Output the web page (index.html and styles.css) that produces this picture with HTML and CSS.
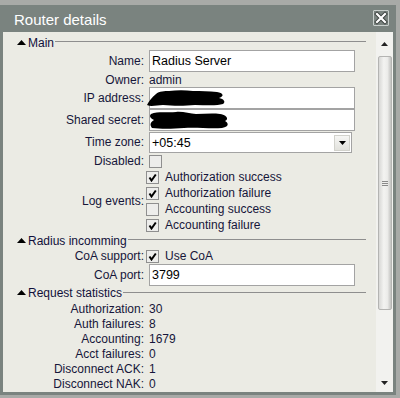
FILE: index.html
```html
<!DOCTYPE html>
<html>
<head>
<meta charset="utf-8">
<link rel="stylesheet" href="styles.css">
</head>
<body>
<div class="dialog">
  <div class="titlebar">
    <span class="title">Router details</span>
    <span class="close">
      <svg width="14" height="14" viewBox="0 0 14 14"><path d="M3 3 L11 11 M11 3 L3 11" stroke="#3a3f3d" stroke-width="4" stroke-linecap="square"/><path d="M3 3 L11 11 M11 3 L3 11" stroke="#ffffff" stroke-width="2.2" stroke-linecap="square"/></svg>
    </span>
  </div>
  <div class="body">
    <div class="content">
      <div class="head"><svg class="tri" width="9" height="5" viewBox="0 0 9 5"><polygon points="0,5 9,5 4.5,0" fill="#000"/></svg><span>Main</span><span class="rule"></span></div>
      <div class="form">
        <div class="lbl r22">Name:</div><div class="ctl r22"><div class="input">Radius Server</div></div>
        <div class="lbl r15">Owner:</div><div class="ctl r15 val">admin</div>
        <div class="lbl r22">IP address:</div><div class="ctl r22"><div class="input"><svg class="blob" width="80" height="18" viewBox="0 0 80 18"><path d="M0 16 C2 12 5 8 9 5 C12 2 18 2 22 2 C30 1 38 1 46 2 C54 2 62 2 70 3 C76 4 78 7 72 9 C77 10 79 13 76 15 C70 17 58 16 48 16 C38 17 26 17 16 16 C10 16 4 18 0 16 Z" fill="#000"/></svg></div></div>
        <div class="lbl r22">Shared secret:</div><div class="ctl r22"><div class="input"><svg class="blob2" width="80" height="19" viewBox="0 0 80 19"><path d="M1 3 C8 0 18 2 26 1 C32 0 40 3 46 3 C54 3 62 2 70 3 C77 4 79 8 75 10 C79 12 79 16 72 17 C60 18 46 16 34 17 C22 18 10 18 2 17 C-1 13 1 11 4 9 C0 7 -1 5 1 3 Z" fill="#000"/></svg></div></div>
        <div class="lbl r22">Time zone:</div><div class="ctl r22"><div class="select"><span>+05:45</span><span class="dd"><svg width="7" height="4" viewBox="0 0 7 4"><polygon points="0,0 7,0 3.5,4" fill="#000"/></svg></span></div></div>
        <div class="lbl r16">Disabled:</div><div class="ctl r16"><span class="cb"></span></div>
        <div class="lbl span4">Log events:</div>
        <div class="ctl r16 chk"><span class="cb"><svg width="9" height="9" viewBox="0 0 9 9"><path d="M1.5 4.5 L3.5 7.5 L7.8 1.5" fill="none" stroke="#000" stroke-width="2"/></svg></span><span>Authorization success</span></div>
        <div class="ctl r16 chk"><span class="cb"><svg width="9" height="9" viewBox="0 0 9 9"><path d="M1.5 4.5 L3.5 7.5 L7.8 1.5" fill="none" stroke="#000" stroke-width="2"/></svg></span><span>Authorization failure</span></div>
        <div class="ctl r16 chk"><span class="cb"></span><span>Accounting success</span></div>
        <div class="ctl r16 chk"><span class="cb"><svg width="9" height="9" viewBox="0 0 9 9"><path d="M1.5 4.5 L3.5 7.5 L7.8 1.5" fill="none" stroke="#000" stroke-width="2"/></svg></span><span>Accounting failure</span></div>
      </div>
      <div class="head"><svg class="tri" width="9" height="5" viewBox="0 0 9 5"><polygon points="0,5 9,5 4.5,0" fill="#000"/></svg><span>Radius incomming</span><span class="rule"></span></div>
      <div class="form">
        <div class="lbl r16">CoA support:</div>
        <div class="ctl r16 chk"><span class="cb"><svg width="9" height="9" viewBox="0 0 9 9"><path d="M1.5 4.5 L3.5 7.5 L7.8 1.5" fill="none" stroke="#000" stroke-width="2"/></svg></span><span>Use CoA</span></div>
        <div class="lbl r22">CoA port:</div><div class="ctl r22"><div class="input">3799</div></div>
      </div>
      <div class="head h14"><svg class="tri" width="9" height="5" viewBox="0 0 9 5"><polygon points="0,5 9,5 4.5,0" fill="#000"/></svg><span>Request statistics</span><span class="rule"></span></div>
      <div class="form stats">
        <div class="lbl r15">Authorization:</div><div class="ctl r15 val">30</div>
        <div class="lbl r15">Auth failures:</div><div class="ctl r15 val">8</div>
        <div class="lbl r15">Accounting:</div><div class="ctl r15 val">1679</div>
        <div class="lbl r15">Acct failures:</div><div class="ctl r15 val">0</div>
        <div class="lbl r15">Disconnect ACK:</div><div class="ctl r15 val">1</div>
        <div class="lbl r15">Disconnect NAK:</div><div class="ctl r15 val">0</div>
      </div>
    </div>
    <div class="scrollbar">
      <div class="sb-up"><svg width="7" height="4" viewBox="0 0 7 4"><polygon points="0,4 7,4 3.5,0" fill="#222"/></svg></div>
      <div class="thumb"><span class="grip"></span><span class="grip"></span><span class="grip"></span></div>
      <div class="sb-space"></div>
      <div class="sb-down"><svg width="7" height="4" viewBox="0 0 7 4"><polygon points="0,0 7,0 3.5,4" fill="#222"/></svg></div>
    </div>
  </div>
</div>
</body>
</html>
```

FILE: styles.css
```css
* { box-sizing: border-box; }

body {
  margin: 0;
  padding-top: 5px;
  width: 400px;
  height: 398px;
  overflow: hidden;
  background: #a8aaa7;
  font-family: "Liberation Sans", Arial, sans-serif;
  font-size: 12px;
  color: #16163a;
}

.dialog {
  width: 396px;
  height: 390px;
  background: #7a837f;
  padding: 0 3px 3px 3px;
  display: flex;
  flex-direction: column;
}

.titlebar {
  height: 27px;
  flex: none;
  display: flex;
  justify-content: space-between;
  align-items: center;
  padding: 0 4px 0 11px;
  color: #ffffff;
  font-size: 15px;
}

.title { margin-top: 1px; }

.close {
  width: 16px;
  height: 16px;
  margin-top: -2px;
  border: 1px solid #c9cfcc;
  border-radius: 1px;
  display: flex;
  align-items: center;
  justify-content: center;
}

.body {
  flex: 1;
  display: flex;
  background: #ebebe4;
  overflow: hidden;
}

.content {
  flex: 1;
  padding-top: 3px;
  overflow: hidden;
}

.head {
  height: 15px;
  display: flex;
  align-items: center;
  padding-left: 14px;
  color: #10103a;
}

.head.h14 { height: 14px; }

.tri { margin-right: 2px; margin-top: -1px; }

.rule {
  flex: 1;
  height: 1px;
  background: #8e8e8e;
  margin: -2px 10px 0 1px;
}

.form {
  display: grid;
  grid-template-columns: 141px 206px;
  column-gap: 5px;
}

.stats { margin-top: 1px; }

.lbl {
  display: flex;
  align-items: center;
  justify-content: flex-end;
  white-space: nowrap;
}

.ctl {
  display: flex;
  align-items: center;
  white-space: nowrap;
}

.r22 { height: 22px; }
.r16 { height: 16px; }
.r15 { height: 15px; }

.span4 { grid-row: span 4; }

.val { color: #16163a; }

.input {
  width: 206px;
  height: 22px;
  background: #ffffff;
  border: 1px solid #a3a3a3;
  padding-left: 2px;
  font-size: 12.5px;
  color: #000;
  display: flex;
  align-items: center;
  overflow: visible;
}

.blob { margin-left: -5px; margin-top: 0; flex: none; }
.blob2 { margin-left: -2px; margin-top: 1px; flex: none; }

.select {
  width: 203px;
  height: 21px;
  margin-top: 1px;
  background: #ffffff;
  border: 1px solid #a3a3a3;
  padding: 1px 1px 1px 2px;
  font-size: 12.5px;
  color: #000;
  display: flex;
  align-items: center;
  justify-content: space-between;
}

.dd {
  width: 16px;
  height: 16px;
  background: linear-gradient(#f6f6f4, #e2e2dd);
  border: 1px solid #d2d2cc;
  display: flex;
  align-items: center;
  justify-content: center;
}

.cb {
  width: 13px;
  height: 13px;
  flex: none;
  background: #ededeb;
  border: 1px solid #8f8f8f;
  display: flex;
  align-items: center;
  justify-content: center;
}

.chk { margin-left: -3px; }
.chk .cb { margin-right: 6px; }

.scrollbar {
  width: 17px;
  flex: none;
  background: #f2f2ef;
  display: flex;
  flex-direction: column;
  align-items: center;
}

.sb-up {
  height: 23px;
  flex: none;
  display: flex;
  align-items: center;
  justify-content: center;
  padding-top: 1px;
}

.thumb {
  width: 14px;
  height: 254px;
  margin-top: 1px;
  flex: none;
  border: 1px solid #b4b4b2;
  border-radius: 2px;
  background: linear-gradient(to right, #d8d8d6, #f3f3f1 40%, #ececea 70%, #c2c2c0);
  display: flex;
  flex-direction: column;
  align-items: center;
  justify-content: center;
  gap: 1px;
}

.grip {
  width: 6px;
  height: 1px;
  background: #8a8a8a;
}

.sb-space { flex: 1; }

.sb-down {
  height: 16px;
  flex: none;
  display: flex;
  align-items: center;
  justify-content: center;
  padding-bottom: 2px;
}
```
